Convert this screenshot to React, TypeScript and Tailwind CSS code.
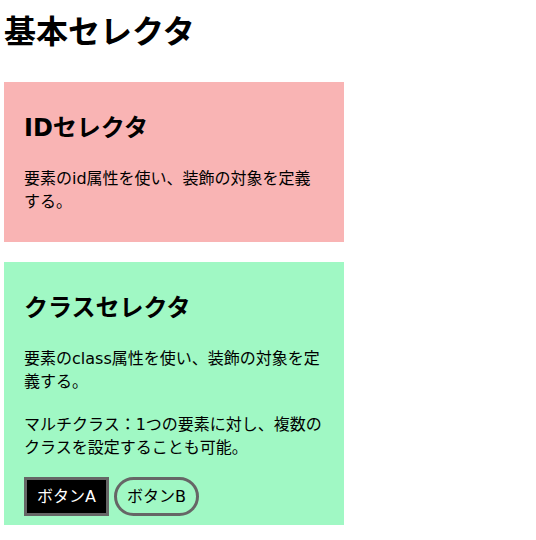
import React from 'react';

const font = 'font-["DejaVu_Sans","Noto_Sans_CJK_JP",sans-serif]';

const App: React.FC = () => {
  return (
    <div className={`${font} min-h-[540px] bg-white px-[4px] pt-[12px] text-black`}>
      {/* Title */}
      <h1 className="mb-[30px] text-[32px] font-bold leading-[40px]">基本セレクタ</h1>

      {/* ID selector */}
      <section className="w-[340px] bg-[#f9b4b4] px-[20px] pt-[28px] pb-[29px]">
        <h2 className="mb-[20px] text-[24px] font-bold leading-[37px]">IDセレクタ</h2>
        <p className="text-[16px] leading-[23px]">要素のid属性を使い、装飾の対象を定義する。</p>
      </section>

      {/* Class selector */}
      <section className="mt-[20px] w-[340px] bg-[#a0f8c4] px-[20px] pt-[28px] pb-[9px]">
        <h2 className="mb-[20px] text-[24px] font-bold leading-[37px]">クラスセレクタ</h2>
        <p className="mb-[20px] text-[16px] leading-[23px]">要素のclass属性を使い、装飾の対象を定義する。</p>
        <p className="mb-[18px] text-[16px] leading-[23px]">
          マルチクラス：1つの要素に対し、複数のクラスを設定することも可能。
        </p>
        <div className="flex gap-[5px]">
          <button className="flex h-[39px] w-[85px] items-center justify-center border-[3px] border-[#666666] bg-black text-[16px] text-white">
            ボタンA
          </button>
          <button className="flex h-[39px] w-[85px] items-center justify-center rounded-full border-[3px] border-[#666666] bg-transparent text-[16px] text-black">
            ボタンB
          </button>
        </div>
      </section>
    </div>
  );
};

export default App;
